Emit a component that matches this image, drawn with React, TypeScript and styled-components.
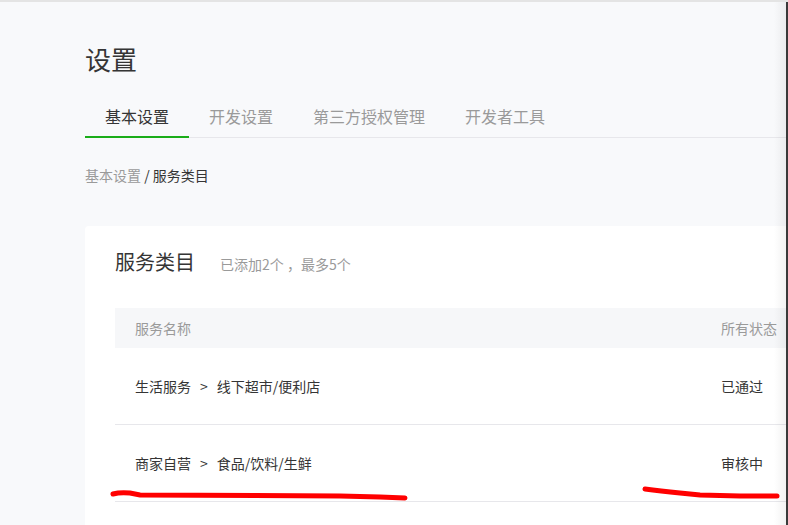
import React from 'react';
import styled, { createGlobalStyle } from 'styled-components';

const palette = {
  bg: '#f8f9fb',
  text: '#353535',
  gray: '#9a9a9a',
  line: '#e7e7eb',
  green: '#1aad19',
  headBg: '#f6f7f9',
};

const GlobalStyle = createGlobalStyle`
  html, body {
    margin: 0;
    padding: 0;
    background: ${palette.bg};
    overflow: hidden;
  }
  body {
    font-family: "Noto Sans CJK SC", "Noto Sans", sans-serif;
    color: ${palette.text};
  }
`;

const Page = styled.div`
  position: relative;
  width: 788px;
  height: 525px;
  overflow: hidden;
  border-top: 2px solid #e4e4e4;
  box-sizing: border-box;
  padding: 39px 0 0 85px;
`;

const Title = styled.h1`
  margin: 0;
  font-size: 26px;
  font-weight: 400;
  line-height: 36px;
`;

const Tabs = styled.ul`
  display: flex;
  list-style: none;
  margin: 19px 0 0;
  padding: 0;
  border-bottom: 1px solid ${palette.line};
`;

const Tab = styled.li<{ $active?: boolean }>`
  padding: 0 20px;
  font-size: 16px;
  line-height: 40px;
  color: ${(p) => (p.$active ? palette.text : palette.gray)};
  border-bottom: 2px solid ${(p) => (p.$active ? palette.green : 'transparent')};
  margin-bottom: -1px;
`;

const Breadcrumb = styled.p`
  margin: 26px 0 0;
  font-size: 14px;
  line-height: 22px;
  color: ${palette.text};

  .crumb-link {
    color: ${palette.gray};
  }
`;

const Card = styled.section`
  margin-top: 40px;
  width: 760px;
  min-height: 320px;
  background: #fff;
  border-radius: 4px;
  padding: 20px 0 0 30px;
  box-sizing: border-box;
`;

const CardHeader = styled.div`
  display: flex;
  align-items: baseline;
  gap: 25px;
  h2 {
    margin: 0;
    font-size: 20px;
    font-weight: 400;
    line-height: 32px;
  }
  span {
    font-size: 14px;
    color: ${palette.gray};
  }
`;

const Table = styled.div`
  margin-top: 30px;
`;

const Row = styled.div<{ $head?: boolean }>`
  display: grid;
  grid-template-columns: 586px auto;
  padding-left: 20px;
  align-items: center;
  font-size: 14px;
  height: ${(p) => (p.$head ? '40px' : '76px')};
  background: ${(p) => (p.$head ? palette.headBg : '#fff')};
  color: ${(p) => (p.$head ? palette.gray : palette.text)};
  border-bottom: ${(p) => (p.$head ? 'none' : `1px solid ${palette.line}`)};
`;

const Arrow = styled.span`
  margin: 0 9px;
`;

const EdgeShadow = styled.div`
  position: absolute;
  top: 0;
  right: 0;
  width: 14px;
  height: 100%;
  background: linear-gradient(to right, rgba(0, 0, 0, 0), rgba(0, 0, 0, 0.05));
  border-right: 2px solid #3a3a3a;
  box-sizing: border-box;
  pointer-events: none;
`;

const Marks = styled.svg`
  position: absolute;
  left: 0;
  top: 0;
  pointer-events: none;
`;

const rows = [
  { cat: '生活服务', sub: '线下超市/便利店', status: '已通过' },
  { cat: '商家自营', sub: '食品/饮料/生鲜', status: '审核中' },
];

const tabs = ['基本设置', '开发设置', '第三方授权管理', '开发者工具'];

export default function App() {
  return (
    <>
      <GlobalStyle />
      <Page>
        <Title>设置</Title>
        <Tabs>
          {tabs.map((t, i) => (
            <Tab key={t} $active={i === 0}>
              {t}
            </Tab>
          ))}
        </Tabs>
        <Breadcrumb>
          <span className="crumb-link">基本设置</span> / 服务类目
        </Breadcrumb>
        <Card>
          <CardHeader>
            <h2>服务类目</h2>
            <span>已添加2个 ，最多5个</span>
          </CardHeader>
          <Table>
            <Row $head>
              <span>服务名称</span>
              <span>所有状态</span>
            </Row>
            {rows.map((r) => (
              <Row key={r.cat}>
                <span>
                  {r.cat}
                  <Arrow>&gt;</Arrow>
                  {r.sub}
                </span>
                <span>{r.status}</span>
              </Row>
            ))}
          </Table>
        </Card>
        <Marks width="788" height="525">
          <path
            d="M113 492 Q120 490 130 491 L140 493 L340 494 L380 495 L405 496"
            stroke="#ff0000"
            strokeWidth="5"
            strokeLinecap="round"
            fill="none"
          />
          <path
            d="M645 487 Q660 489 680 491 L700 493 L740 494 L777 494"
            stroke="#ff0000"
            strokeWidth="5"
            strokeLinecap="round"
            fill="none"
          />
        </Marks>
        <EdgeShadow />
      </Page>
    </>
  );
}
